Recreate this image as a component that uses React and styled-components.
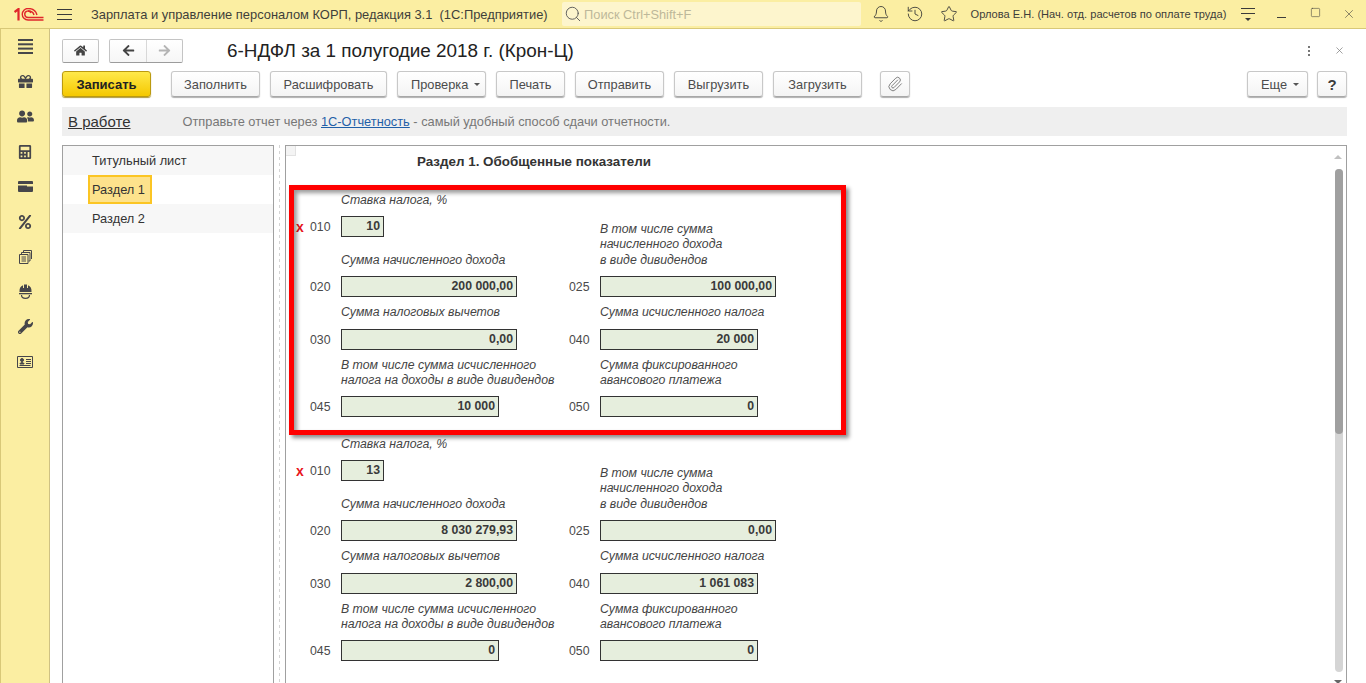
import React from "react";
import styled, { createGlobalStyle } from "styled-components";
import { Bell, History, Star, Search, Paperclip, X, Square } from "lucide-react";
import {
  FaGift,
  FaUserFriends,
  FaCalculator,
  FaPercent,
  FaWrench,
  FaHome,
  FaArrowLeft,
  FaArrowRight,
} from "react-icons/fa";

const GlobalStyle = createGlobalStyle`
  html, body, #root {
    margin: 0;
    height: 100%;
  }
  body {
    font-family: "Liberation Sans", Arial, sans-serif;
    font-size: 12.8px;
    color: #333;
    overflow: hidden;
    background: #fff;
  }
`;

const Page = styled.div`
  display: flex;
  flex-direction: column;
  height: 683px;
  overflow: hidden;
`;

const TopBar = styled.div`
  display: flex;
  align-items: center;
  flex: 0 0 29px;
  box-sizing: border-box;
  background: #fbeea2;
  border-bottom: 1px solid #d8c878;
`;

const LogoBox = styled.div`
  display: flex;
  margin-left: 14px;
  width: 30px;
`;

const MenuLines = styled.div`
  display: flex;
  flex-direction: column;
  gap: 4px;
  width: 15px;
  margin-left: 13px;

  span {
    height: 1px;
    background: #3a3a3a;
  }
`;

const AppTitle = styled.div`
  margin-left: 19px;
  width: 472px;
  font-size: 12.9px;
  color: #3f3f3a;
  white-space: pre;
`;

const SearchBox = styled.div`
  display: flex;
  align-items: center;
  gap: 2px;
  width: 299px;
  height: 24px;
  box-sizing: border-box;
  padding-left: 2px;
  background: #fdf5cd;
  border-radius: 2px;
  color: #bdb89a;
  svg {
    color: #555;
  }
`;

const BarIcon = styled.div`
  display: flex;
  justify-content: center;
  width: 34px;
  color: #3d3d3a;
`;

const BarIcons = styled.div`
  display: flex;
  margin-left: 3px;
`;

const UserName = styled.div`
  margin-left: 5px;
  width: 272px;
  font-size: 11.1px;
  color: #3d3d3a;
  white-space: nowrap;
`;

const Burger = styled.div`
  display: flex;
  flex-direction: column;
  align-items: center;
  gap: 4px;
  width: 14px;
  margin-left: -1px;

  span {
    width: 14px;
    height: 1px;
    background: #3a3a3a;
  }
  i {
    width: 0;
    height: 0;
    border: 3px solid transparent;
    border-top-color: #3a3a3a;
    border-bottom: 0;
  }
`;

const WindowButtons = styled.div`
  display: flex;
  margin-left: 9px;
  width: 102px;
`;

const MinimizeLine = styled.span`
  width: 9px;
  height: 1px;
  margin-top: 10px;
  background: #3d3d3a;
`;

const Body = styled.div`
  display: flex;
  flex: 1;
  min-height: 0;
`;

const Sidebar = styled.div`
  display: flex;
  flex-direction: column;
  flex: 0 0 50px;
  box-sizing: border-box;
  background: #fbeea2;
  border-left: 1px solid #d8c878;
  border-right: 1px solid #cfc183;
`;

const SideItem = styled.div`
  display: flex;
  align-items: center;
  justify-content: center;
  height: 35px;
  color: #46464a;
`;

const Main = styled.div`
  display: flex;
  flex-direction: column;
  flex: 1;
  min-width: 0;
  padding: 9px 19px 0 12px;
`;

const TitleRow = styled.div`
  display: flex;
  align-items: center;
  height: 25px;
`;

const NavGroup = styled.div`
  display: flex;
  height: 24px;
  margin-right: 10px;
  box-sizing: border-box;
  background: linear-gradient(#fff, #f6f6f6);
  border: 1px solid #c4c4c4;
  border-bottom-color: #9c9c9c;
  border-radius: 2px;
`;

const NavButton = styled.div`
  display: flex;
  align-items: center;
  justify-content: center;
  width: ${(props) => props.$w}px;
  color: ${(props) => (props.$dim ? "#b4b4b4" : "#444")};
  & + & {
    border-left: 1px solid #d8d8d8;
  }
`;

const Title = styled.div`
  margin-left: 34px;
  font-size: 18.9px;
  color: #222;
`;

const TitleActions = styled.div`
  display: flex;
  align-items: center;
  margin-left: auto;
  gap: 24px;
  padding-right: 2px;
  color: #777;
`;

const Dots = styled.div`
  display: flex;
  flex-direction: column;
  gap: 2px;
  span {
    width: 2px;
    height: 2px;
    background: #777;
  }
`;

const Toolbar = styled.div`
  display: flex;
  margin-top: 8px;
  height: 26px;
`;

const Button = styled.div`
  display: flex;
  align-items: center;
  justify-content: center;
  gap: 6px;
  flex: 0 0 ${(props) => props.$w}px;
  margin-left: ${(props) => props.$gap ?? 10}px;
  box-sizing: border-box;
  background: linear-gradient(#fff, #f4f4f4);
  border: 1px solid #c8c8c8;
  border-bottom-color: #a8a8a8;
  border-radius: 3px;
  box-shadow: 0 1px 1px #b0b0b0;
  color: #4c4c4c;
`;

const MenuButton = styled(Button)`
  justify-content: flex-start;
  padding-left: 13px;
`;

const PrimaryButton = styled(Button)`
  background: linear-gradient(#ffe94a, #f5c800);
  border-color: #bb9a10;
  box-shadow: 0 1px 1px #b09a40;
  color: #222;
  font-size: 13px;
  font-weight: bold;
`;

const HelpMark = styled.span`
  font-size: 15px;
  font-weight: bold;
  color: #3c3c3c;
`;

const Caret = styled.i`
  width: 0;
  height: 0;
  border: 3px solid transparent;
  border-top-color: #555;
  border-bottom: 0;
`;

const RightButtons = styled.div`
  display: flex;
  margin-left: auto;
`;

const StatusBar = styled.div`
  display: flex;
  align-items: center;
  margin-top: 10px;
  height: 29px;
  padding-left: 6px;
  background: #efefef;
  color: #777;
`;

const StatusLabel = styled.div`
  margin-right: 52px;
  font-size: 15px;
  color: #333;
  text-decoration: underline;
`;

const StatusLink = styled.span`
  color: #1f5fa8;
  text-decoration: underline;
`;

const Panels = styled.div`
  display: flex;
  flex: 1;
  min-height: 0;
  margin-top: 9px;
`;

const TreePanel = styled.div`
  flex: 0 0 212px;
  box-sizing: border-box;
  border: 1px solid #a0a0a0;
  border-bottom: 0;
`;

const TreeRow = styled.div`
  display: flex;
  align-items: center;
  height: 29px;
  padding-left: ${(props) => (props.$selected ? 25 : 29)}px;
  background: ${(props) => (props.$alt ? "#f7f7f7" : "#fff")};
  color: #333;
`;

const TreeSelected = styled.div`
  display: flex;
  align-items: center;
  width: 64px;
  height: 29px;
  padding-left: 2px;
  box-sizing: border-box;
  background: #fde28c;
  border: 2px solid #fbc524;
`;

const Splitter = styled.div`
  flex: 0 0 11px;
  background: repeating-linear-gradient(
      #d4d4d4 0 3px,
      transparent 3px 6px
    )
    center / 1px 100% no-repeat;
`;

const FormPanel = styled.div`
  position: relative;
  flex: 1;
  min-width: 0;
  box-sizing: border-box;
  border: 1px solid #a0a0a0;
  border-bottom: 0;
  overflow: hidden;
`;

const Corner = styled.div`
  position: absolute;
  left: 0;
  top: 0;
  width: 10px;
  height: 10px;
  background: #f4f4f4;
  box-shadow: inset -1px -1px 0 #e2e2e2;
`;

const FormHeading = styled.div`
  height: 46px;
  padding: 8px 0 0 131px;
  box-sizing: border-box;
  font-size: 13.4px;
  font-weight: bold;
  color: #333;
`;

const Block = styled.div`
  display: grid;
  grid-template-columns: 14px 31px 228px 31px 240px;
  grid-template-rows: 24px 21px 39px 21px 32px 21px 46px 21px;
  padding-left: 10px;
  margin-bottom: 19px;
  font-size: 12.3px;
`;

const Mark = styled.div`
  grid-column: 1;
  grid-row: ${(props) => props.$row};
  align-self: center;
  font-size: 14px;
  font-weight: bold;
  color: #e8131b;
`;

const Code = styled.div`
  grid-column: ${(props) => props.$col};
  grid-row: ${(props) => props.$row};
  align-self: center;
  color: #4a4a4a;
`;

const Caption = styled.div`
  grid-column: ${(props) => props.$col};
  grid-row: ${(props) => props.$row};
  align-self: center;
  font-style: italic;
  line-height: 15.5px;
  color: #444;
  white-space: pre-line;
`;

const TopCaption = styled(Caption)`
  align-self: start;
  margin-top: 1px;
`;

const BottomCaption = styled(Caption)`
  align-self: end;
  margin-bottom: 8px;
`;

const Field = styled.div`
  grid-column: ${(props) => props.$col};
  grid-row: ${(props) => props.$row};
  width: ${(props) => props.$w}px;
  box-sizing: border-box;
  padding-right: 3px;
  background: #e6eedd;
  border: 1px solid #333;
  font-weight: bold;
  line-height: 19px;
  text-align: right;
  color: #3a3a3a;
`;

const RedFrame = styled.div`
  position: absolute;
  left: 3px;
  top: 39px;
  width: 557px;
  height: 250px;
  box-sizing: border-box;
  border: 5px solid #ff0000;
  box-shadow: 3px 3px 4px rgba(0, 0, 0, 0.45),
    inset 3px 3px 4px rgba(0, 0, 0, 0.4);
  pointer-events: none;
`;

const ScrollArrow = styled.i`
  position: absolute;
  right: 4px;
  width: 0;
  height: 0;
  border: 4px solid transparent;
  ${(props) =>
    props.$down
      ? "top: 534px; border-top-color: #666; border-bottom: 0;"
      : "top: 9px; border-bottom-color: #c0c0c0; border-top: 0;"}
`;

const ScrollTrack = styled.div`
  position: absolute;
  right: 3px;
  top: 23px;
  width: 8px;
  height: 503px;
  border-radius: 4px;
  background: #d5d5d5;
`;

const ScrollThumb = styled.div`
  height: 265px;
  border-radius: 4px;
  background: #a0a0a0;
`;

const sideIcons = [
  <svg key="menu" width="15" height="15" viewBox="0 0 15 15" fill="#46464a">
    <rect y="0" width="15" height="2" />
    <rect y="4.3" width="15" height="2" />
    <rect y="8.6" width="15" height="2" />
    <rect y="13" width="15" height="2" />
  </svg>,
  <FaGift key="gift" size={15} />,
  <FaUserFriends key="users" size={17} />,
  <FaCalculator key="calc" size={14} />,
  <svg key="card" width="15" height="11" viewBox="0 0 15 11" fill="#46464a">
    <path d="M0 1a1 1 0 0 1 1-1h13a1 1 0 0 1 1 1v2H0zM0 4.5h9v1h6V10a1 1 0 0 1-1 1H1a1 1 0 0 1-1-1z" />
  </svg>,
  <FaPercent key="pct" size={14} />,
  <svg key="docs" width="13" height="14" viewBox="0 0 13 14" fill="none" stroke="#46464a">
    <path d="M.5 4.500H9v9H.5zM2.500 7H7M2.500 9H7M2.500 11H7M2.500 4V2.500H11V11H9.500M4.500 2V.5h8V9" />
  </svg>,
  <svg key="hat" width="13" height="15" viewBox="0 0 13 15" fill="#46464a">
    <path d="M5 .5h3V4H9V1.200A6 6 0 0 1 12.500 7v1H.5V7A6 6 0 0 1 4 1.200V4h1z" />
    <path d="M0 9h13v1.300H0z" />
    <path d="M2.500 11c0 4.400 8 4.400 8 0" fill="none" stroke="#46464a" strokeWidth="1.200" />
  </svg>,
  <FaWrench key="wrench" size={15} />,
  <svg key="id" width="16" height="12" viewBox="0 0 16 12" fill="none" stroke="#46464a">
    <path d="M.5.5h15v11H.5zM9 3.500h5M9 5.500h5M9 7.500h5M2.500 9.500h11" />
    <circle cx="5" cy="4" r="1.500" fill="#46464a" />
    <path d="M3 8c0-2 4-2 4 0z" fill="#46464a" />
  </svg>,
];

const toolbarButtons = [
  { label: "Заполнить", w: 89, gap: 20 },
  { label: "Расшифровать", w: 117 },
  { label: "Проверка", w: 89, caret: true },
  { label: "Печать", w: 69 },
  { label: "Отправить", w: 89 },
  { label: "Выгрузить", w: 89 },
  { label: "Загрузить", w: 89 },
];

const blocks = [
  {
    rate: "10",
    income: "200 000,00",
    dividends: "100 000,00",
    deduction: "0,00",
    tax: "20 000",
    divTax: "10 000",
    advance: "0",
  },
  {
    rate: "13",
    income: "8 030 279,93",
    dividends: "0,00",
    deduction: "2 800,00",
    tax: "1 061 083",
    divTax: "0",
    advance: "0",
  },
];

function TaxBlock({ data }) {
  return (
    <Block>
      <TopCaption $col={3} $row={1}>
        Ставка налога, %
      </TopCaption>
      <Mark $row={2}>x</Mark>
      <Code $col={2} $row={2}>010</Code>
      <Field $col={3} $row={2} $w={43}>{data.rate}</Field>
      <BottomCaption $col={5} $row="2 / 4">
        {"В том числе сумма\nначисленного дохода\nв виде дивидендов"}
      </BottomCaption>
      <BottomCaption $col={3} $row={3}>
        Сумма начисленного дохода
      </BottomCaption>

      <Code $col={2} $row={4}>020</Code>
      <Field $col={3} $row={4} $w={176}>{data.income}</Field>
      <Code $col={4} $row={4}>025</Code>
      <Field $col={5} $row={4} $w={176}>{data.dividends}</Field>

      <Caption $col={3} $row={5}>Сумма налоговых вычетов</Caption>
      <Caption $col={5} $row={5}>Сумма исчисленного налога</Caption>

      <Code $col={2} $row={6}>030</Code>
      <Field $col={3} $row={6} $w={176}>{data.deduction}</Field>
      <Code $col={4} $row={6}>040</Code>
      <Field $col={5} $row={6} $w={158}>{data.tax}</Field>

      <Caption $col={3} $row={7}>
        {"В том числе сумма исчисленного\nналога на доходы в виде дивидендов"}
      </Caption>
      <Caption $col={5} $row={7}>
        {"Сумма фиксированного\nавансового платежа"}
      </Caption>

      <Code $col={2} $row={8}>045</Code>
      <Field $col={3} $row={8} $w={158}>{data.divTax}</Field>
      <Code $col={4} $row={8}>050</Code>
      <Field $col={5} $row={8} $w={158}>{data.advance}</Field>
    </Block>
  );
}

export default function App() {
  return (
    <Page>
      <GlobalStyle />
      <TopBar>
        <LogoBox>
          <svg width="30" height="13" viewBox="0 0 30 13" fill="none" stroke="#e0262b">
            <path d="M.5 4 4.500 1V12.500" strokeWidth="2.200" />
            <path d="M29.500 12H14A5.750 5.750 0 1 1 14 .5C19 .5 22 3 23 7" strokeWidth="1.400" />
            <path d="M29.500 9.500H14A3.250 3.250 0 1 1 17 5" strokeWidth="1.400" />
            <path d="M14 3C17 3 19.500 4.500 20 7" strokeWidth="1.400" />
          </svg>
        </LogoBox>
        <MenuLines>
          <span />
          <span />
          <span />
        </MenuLines>
        <AppTitle>Зарплата и управление персоналом КОРП, редакция 3.1  (1С:Предприятие)</AppTitle>
        <SearchBox>
          <Search size={18} strokeWidth={1.2} />
          Поиск Ctrl+Shift+F
        </SearchBox>
        <BarIcons>
          <BarIcon><Bell size={18} strokeWidth={1.2} /></BarIcon>
          <BarIcon><History size={18} strokeWidth={1.2} /></BarIcon>
          <BarIcon><Star size={18} strokeWidth={1.2} /></BarIcon>
        </BarIcons>
        <UserName>Орлова Е.Н. (Нач. отд. расчетов по оплате труда)</UserName>
        <Burger>
          <span />
          <span />
          <i />
        </Burger>
        <WindowButtons>
          <BarIcon><MinimizeLine /></BarIcon>
          <BarIcon><Square size={11} strokeWidth={1.2} /></BarIcon>
          <BarIcon><X size={14} strokeWidth={1} /></BarIcon>
        </WindowButtons>
      </TopBar>
      <Body>
        <Sidebar>
          {sideIcons.map((icon) => (
            <SideItem key={icon.key}>{icon}</SideItem>
          ))}
        </Sidebar>
        <Main>
          <TitleRow>
            <NavGroup>
              <NavButton $w={35}><FaHome size={13} /></NavButton>
            </NavGroup>
            <NavGroup>
              <NavButton $w={36}><FaArrowLeft size={13} /></NavButton>
              <NavButton $w={35} $dim><FaArrowRight size={13} /></NavButton>
            </NavGroup>
            <Title>6-НДФЛ за 1 полугодие 2018 г. (Крон-Ц)</Title>
            <TitleActions>
              <Dots>
                <span />
                <span />
                <span />
              </Dots>
              <X size={11} strokeWidth={1.5} />
            </TitleActions>
          </TitleRow>
          <Toolbar>
            <PrimaryButton $w={89} $gap={0}>Записать</PrimaryButton>
            {toolbarButtons.map((b) =>
              b.caret ? (
                <MenuButton key={b.label} $w={b.w} $gap={b.gap}>
                  {b.label}
                  <Caret />
                </MenuButton>
              ) : (
                <Button key={b.label} $w={b.w} $gap={b.gap}>
                  {b.label}
                </Button>
              )
            )}
            <Button $w={30} $gap={18}><Paperclip size={16} strokeWidth={1.4} color="#777" /></Button>
            <RightButtons>
              <MenuButton $w={61} $gap={0}>Еще<Caret /></MenuButton>
              <Button $w={30} $gap={9}><HelpMark>?</HelpMark></Button>
            </RightButtons>
          </Toolbar>
          <StatusBar>
            <StatusLabel>В работе</StatusLabel>
            <span>
              Отправьте отчет через <StatusLink>1С-Отчетность</StatusLink> - самый удобный способ сдачи отчетности.
            </span>
          </StatusBar>
          <Panels>
            <TreePanel>
              <TreeRow $alt>Титульный лист</TreeRow>
              <TreeRow $selected>
                <TreeSelected>Раздел 1</TreeSelected>
              </TreeRow>
              <TreeRow $alt>Раздел 2</TreeRow>
            </TreePanel>
            <Splitter />
            <FormPanel>
              <Corner />
              <FormHeading>Раздел 1. Обобщенные показатели</FormHeading>
              {blocks.map((b) => (
                <TaxBlock key={b.rate} data={b} />
              ))}
              <RedFrame />
              <ScrollArrow />
              <ScrollTrack>
                <ScrollThumb />
              </ScrollTrack>
              <ScrollArrow $down />
            </FormPanel>
          </Panels>
        </Main>
      </Body>
    </Page>
  );
}
